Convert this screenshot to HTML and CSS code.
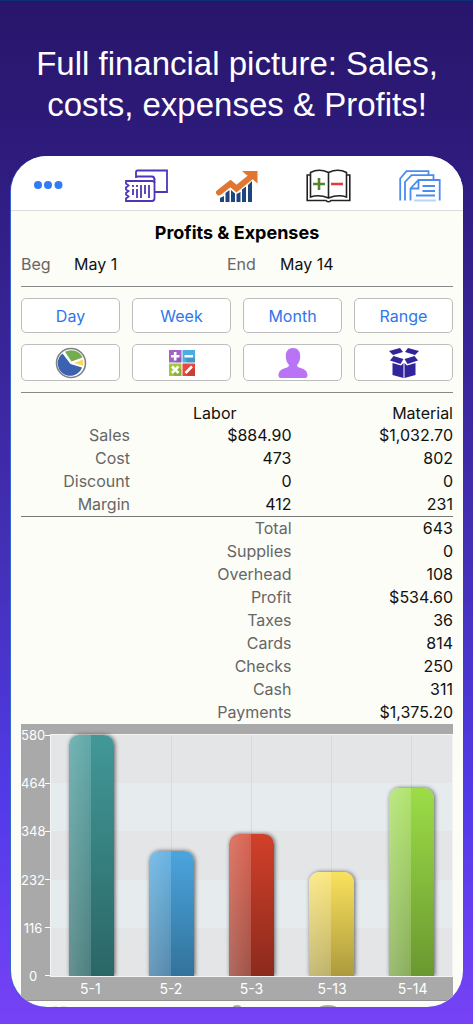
FILE: index.html
```html
<!DOCTYPE html>
<html lang="en">
<head>
    <meta charset="UTF-8">
    <meta name="viewport" content="width=device-width, initial-scale=1.0">
    <title>Profits &amp; Expenses</title>
    <link rel="stylesheet" href="styles.css">
</head>
<body>
    <h1>Full financial picture: Sales, costs, expenses &amp; Profits!</h1>

    <main class="phone">
        <nav class="toolbar">
            <button aria-label="More">
                <svg width="42" height="32" viewBox="0 0 42 32" fill="#2f7cf6">
                    <circle cx="4" cy="15" r="4"/><circle cx="14" cy="15" r="4"/><circle cx="24.500" cy="15" r="4"/>
                </svg>
            </button>
            <button aria-label="Tickets">
                <svg width="44" height="34" viewBox="0 0 44 34" fill="none" stroke="#4f35b8" stroke-width="1.800">
                    <path d="M12 9V3Q12 1.500 13.500 1.500H43V23H31"/>
                    <path d="M12 7.500H28Q30.500 7.500 30.500 11"/>
                    <path d="M2 12H28Q30.500 12 30.500 14V29Q30.500 32 28 32H2V29.500L4.500 27.500L2 25.500V24L4.500 22L2 20.500V18.500L4.500 16.500L2 14.500Z"/>
                    <path d="M30.500 10V14M9 16v2M9 20v6M13 16v2M13 20v9M17 16v13M21 16v9M25 16v13"/>
                </svg>
            </button>
            <button aria-label="Sales">
                <svg width="42" height="32" viewBox="0 0 42 32">
                    <path fill="#1f4580" d="M4 28l4-2v6H4zM9.500 23l4-3v12h-4zM15 20l4 3.500V32h-4zM20.500 24l4-2v10h-4zM26 19.500l4-3V32h-4zM32 15l4-4v21h-4z"/>
                    <path fill="none" stroke="#e0762f" stroke-width="6" stroke-linecap="round" d="M3 22.500L14.500 13.500L20.500 18.500L36 6"/>
                    <path fill="#e0762f" d="M26 1H41.500V13.500L37.500 10L30 4.500Z"/>
                </svg>
            </button>
            <button aria-label="Profits and expenses">
                <svg width="45" height="34" viewBox="0 0 45 34" fill="none" stroke="#222" stroke-width="1.600">
                    <path d="M4.500 28V3.500Q13-1 22.500 3.500Q32-1 40.500 3.500V28Q32 25 22.500 29Q13 25 4.500 28ZM22.500 3.500V29"/>
                    <path d="M4 6H1.200V31.500H20Q22.500 34 25 31.500H43.800V6H41"/>
                    <path stroke="#55822a" stroke-width="2.600" d="M7 15H19M13 9V21"/>
                    <path stroke="#e63946" stroke-width="2.600" d="M25 15H37"/>
                </svg>
            </button>
            <button aria-label="Documents">
                <svg width="42" height="32" viewBox="0 0 42 32" fill="none" stroke="#4a8cf0" stroke-width="1.800">
                    <path d="M1.200 30.500V8.500L7.500 1.200H29.500V5"/>
                    <path d="M6 30.500V12L12.500 5.200H34.500V10"/>
                    <path d="M11.500 30.500V18.500L19.500 10H40.700V30.500M19.500 10V18.500H11.500"/>
                    <path d="M23.500 16H36M23.500 21H36M17 25.500H36"/>
                    <path stroke="#bcd3fa" d="M15 30.500H37"/>
                </svg>
            </button>
        </nav>

        <div class="content">
            <h2>Profits &amp; Expenses</h2>

            <div class="dates">
                <label for="beg">Beg</label>
                <input type="text" id="beg" value="May 1">
                <label for="end">End</label>
                <input type="text" id="end" value="May 14">
            </div>

            <div class="filters">
                <button>Day</button>
                <button>Week</button>
                <button>Month</button>
                <button>Range</button>
                <button aria-label="Pie chart">
                    <svg width="32" height="32" viewBox="0 0 32 32">
                        <circle cx="16" cy="16" r="14.500" fill="#fff" stroke="#808080" stroke-width="1.600"/>
                        <path fill="#3b62ae" d="M15.500 17L27 20.500A12.500 12.500 0 1 1 7.500 6.500Z"/>
                        <path fill="#74ac50" d="M16.500 14.500L10 4.800A12.500 12.500 0 0 1 27.500 10.500Z"/>
                        <path fill="#fbd85c" d="M19 16L28 12.500A12.500 12.500 0 0 1 28 18.800Z"/>
                    </svg>
                </button>
                <button aria-label="Calculator">
                    <svg width="28" height="28" viewBox="0 0 28 28" stroke="#fff" stroke-width="2.600">
                        <g stroke="none">
                            <path fill="#a463c6" d="M1 1h12.500v12.500H1z"/>
                            <path fill="#4cade0" d="M14.500 1H27v12.500H14.500z"/>
                            <path fill="#a0c83c" d="M1 14.500h12.500V27H1z"/>
                            <path fill="#e8483f" d="M14.500 14.500H27V27H14.500z"/>
                            <path fill="#000" opacity=".12" d="M11 7l2.500 2.500v4H7zM25 8l2 2v3.500h-8l-2-5zM10 17l3.500 3.500V27H7l-3-3zM24 17l3 3v7h-7l-3-3z"/>
                        </g>
                        <path d="M3 7.200h8.500M7.200 3v8.500M16.500 7.200H25M4 17.500l6.500 6.500M10.500 17.500L4 24M17.500 24l6.500-6.500"/>
                    </svg>
                </button>
                <button aria-label="Customers">
                    <svg width="30" height="30" viewBox="0 0 30 30" fill="#b973f5">
                        <path d="M15 0C10.500 0 7.800 3 7.800 8C7.800 12 9 15 11 17C11 19 9 19.500 6 20.500C2 22 .5 24 .5 28Q.5 30 3 30H27Q29.500 30 29.500 28C29.500 24 28 22 24 20.500C21 19.500 19 19 19 17C21 15 22.200 12 22.200 8C22.200 3 19.500 0 15 0Z"/>
                    </svg>
                </button>
                <button aria-label="Materials">
                    <svg width="30" height="30" viewBox="0 0 30 30" fill="#32249a">
                        <path d="M0 3L11 0L14 4L4 7Z"/>
                        <path d="M30 3L19 0L16 4L26 7Z"/>
                        <path d="M4.500 8L14.500 11L11.500 16L1 12.500Z"/>
                        <path d="M25.500 8L15.500 11L18.500 16L29 12.500Z"/>
                        <path d="M3.500 15L12 17.500L14.500 15V30L3.500 27Z"/>
                        <path d="M26.500 15L18 17.500L15.500 15V30L26.500 27Z"/>
                    </svg>
                </button>
            </div>

            <table>
                <thead>
                    <tr><td></td><th class="labor">Labor</th><th>Material</th></tr>
                </thead>
                <tbody>
                    <tr><th>Sales</th><td>$884.90</td><td>$1,032.70</td></tr>
                    <tr><th>Cost</th><td>473</td><td>802</td></tr>
                    <tr><th>Discount</th><td>0</td><td>0</td></tr>
                    <tr><th>Margin</th><td>412</td><td>231</td></tr>
                </tbody>
                <tbody class="totals">
                    <tr><th colspan="2">Total</th><td>643</td></tr>
                    <tr><th colspan="2">Supplies</th><td>0</td></tr>
                    <tr><th colspan="2">Overhead</th><td>108</td></tr>
                    <tr><th colspan="2">Profit</th><td>$534.60</td></tr>
                    <tr><th colspan="2">Taxes</th><td>36</td></tr>
                    <tr><th colspan="2">Cards</th><td>814</td></tr>
                    <tr><th colspan="2">Checks</th><td>250</td></tr>
                    <tr><th colspan="2">Cash</th><td>311</td></tr>
                    <tr><th colspan="2">Payments</th><td>$1,375.20</td></tr>
                </tbody>
            </table>

            <div class="chart">
                <div class="y-axis">
                    <span>580</span>
                    <span>464</span>
                    <span>348</span>
                    <span>232</span>
                    <span>116</span>
                    <span>0</span>
                </div>
                <div class="plot">
                    <div class="col"><div class="bar teal" style="height: 100%"></div></div>
                    <div class="col"><div class="bar blue" style="height: 52%"></div></div>
                    <div class="col"><div class="bar red" style="height: 59%"></div></div>
                    <div class="col"><div class="bar yellow" style="height: 43%"></div></div>
                    <div class="col"><div class="bar green" style="height: 78%"></div></div>
                </div>
                <div class="x-axis">
                    <span>5-1</span>
                    <span>5-2</span>
                    <span>5-3</span>
                    <span>5-13</span>
                    <span>5-14</span>
                </div>
            </div>
        </div>

        <!-- top of the next chart, cut by the card -->
        <svg class="next" viewBox="0 0 452 6" fill="#a9a9a9">
            <ellipse cx="226" cy="6" rx="4" ry="2"/>
            <ellipse cx="317" cy="7" rx="9" ry="3"/>
            <path opacity=".3" d="M42 5h4v1h-4zM50 5h5v1h-5z"/>
        </svg>
    </main>
</body>
</html>
```

FILE: styles.css
```css
* {
    box-sizing: border-box;
}

body {
    margin: 0;
    padding: 42px 10px 16px 11px;
    min-height: 100vh;
    font-family: Inter, 'Liberation Sans', sans-serif;
    font-size: 16px;
    color: #111;
    border-top: 1px solid #0b2f78;
    background: linear-gradient(#27166a, #2e1b7c 15%, #4430b8 55%, #523ae8 78%, #6b40f2 93%, #7642f5);
}

h1 {
    margin: 0 0 31px;
    font-family: 'Liberation Sans', Arial, sans-serif;
    font-size: 33px;
    font-weight: normal;
    line-height: 41px;
    text-align: center;
    color: white;
}

button {
    padding: 0;
    border: none;
    background: none;
    font: inherit;
    cursor: pointer;
}

svg {
    display: block;
}

.phone {
    overflow: hidden;
    border-radius: 36px;
    background-color: #fcfdf7;
    box-shadow: -1px 0 0 #3a62d0;
}

.toolbar {
    display: flex;
    justify-content: space-between;
    align-items: center;
    height: 55px;
    padding: 6px 22px 0 23px;
    background-color: white;
    border-bottom: 1px solid #dcdcdc;
}

.content {
    padding: 0 10px;
}

h2 {
    margin: 0;
    padding-top: 11px;
    font-size: 18px;
    font-weight: 700;
    line-height: 22px;
    text-align: center;
    color: black;
}

.dates {
    display: grid;
    grid-template-columns: 53px 153px 53px 1fr;
    align-items: center;
    height: 43px;
    padding-bottom: 3px;
    border-bottom: 1px solid #888;
}

.dates label {
    color: #666;
}

.dates input {
    width: 100%;
    padding: 0;
    border: none;
    background: none;
    font: inherit;
    color: #111;
}

/* Buttons */
.filters {
    display: grid;
    grid-template-columns: repeat(4, 1fr);
    grid-template-rows: 35px 37px;
    gap: 11px 12px;
    padding: 11px 0;
    border-bottom: 1px solid #888;
}

.filters button {
    display: flex;
    align-items: center;
    justify-content: center;
    border: 1px solid #bdbdbd;
    border-radius: 5px;
    background-color: white;
    color: #2f76ea;
}

/* Table */
table {
    width: 100%;
    margin-top: 10px;
    table-layout: fixed;
    border-collapse: collapse;
    line-height: 23px;
}

th, td {
    padding: 0;
    font-weight: normal;
    text-align: right;
}

thead {
    line-height: 21px;
}

thead td {
    width: 109px;
}

tbody th {
    color: #666;
}

thead .labor {
    padding-right: 55px;
}

.totals {
    border-top: 1px solid #777;
}

/* Chart */
.chart {
    display: grid;
    grid-template-columns: 29px 1fr;
    grid-template-rows: 243px 23px;
    padding-top: 10px;
    background-color: #a9a9a9;
    border-bottom: 1px solid #909090;
    font-size: 14px;
    line-height: 16px;
    color: white;
}

.y-axis {
    display: flex;
    flex-direction: column;
    justify-content: space-between;
    margin: -7px 0;
    font-size: 13px;
}

.y-axis span {
    padding-right: 5px;
    text-align: center;
    background: linear-gradient(white, white) right center / 5px 1px no-repeat;
}

.plot {
    display: flex;
    border: 1px solid #f4f4f4;
    background: repeating-linear-gradient(#e4e5e7 0 20%, #e6ebee 20% 40%);
}

.col {
    flex: 1;
    display: flex;
    align-items: flex-end;
    justify-content: center;
    background: linear-gradient(#d9dadc, #d9dadc) center / 1px 100% no-repeat;
}

.bar {
    width: 56%;
    border-radius: 10px 10px 0 0;
    box-shadow: 1px 0 4px rgba(0, 0, 0, 0.6);
    clip-path: inset(-6px -6px 0 -6px);
}

.teal {
    background: linear-gradient(to right, rgba(255, 255, 255, 0.28), rgba(255, 255, 255, 0.16) 50%, transparent 50%), linear-gradient(#429898, #2b6666);
}

.blue {
    background: linear-gradient(to right, rgba(255, 255, 255, 0.28), rgba(255, 255, 255, 0.16) 50%, transparent 50%), linear-gradient(#4ba5de, #32729b);
}

.red {
    background: linear-gradient(to right, rgba(255, 255, 255, 0.3), rgba(255, 255, 255, 0.18) 50%, transparent 50%), linear-gradient(#d1402a, #8c2a1c);
}

.yellow {
    background: linear-gradient(to right, rgba(255, 255, 255, 0.32), rgba(255, 255, 255, 0.22) 50%, transparent 50%), linear-gradient(#fae15c, #ac9b3e);
}

.green {
    background: linear-gradient(to right, rgba(255, 255, 255, 0.34), rgba(255, 255, 255, 0.2) 50%, transparent 50%), linear-gradient(#9cdd47, #6a9830);
}

.x-axis {
    grid-column: 2;
    display: flex;
    align-items: center;
}

.x-axis span {
    flex: 1;
    text-align: center;
}

.next {
    width: 100%;
}
```
